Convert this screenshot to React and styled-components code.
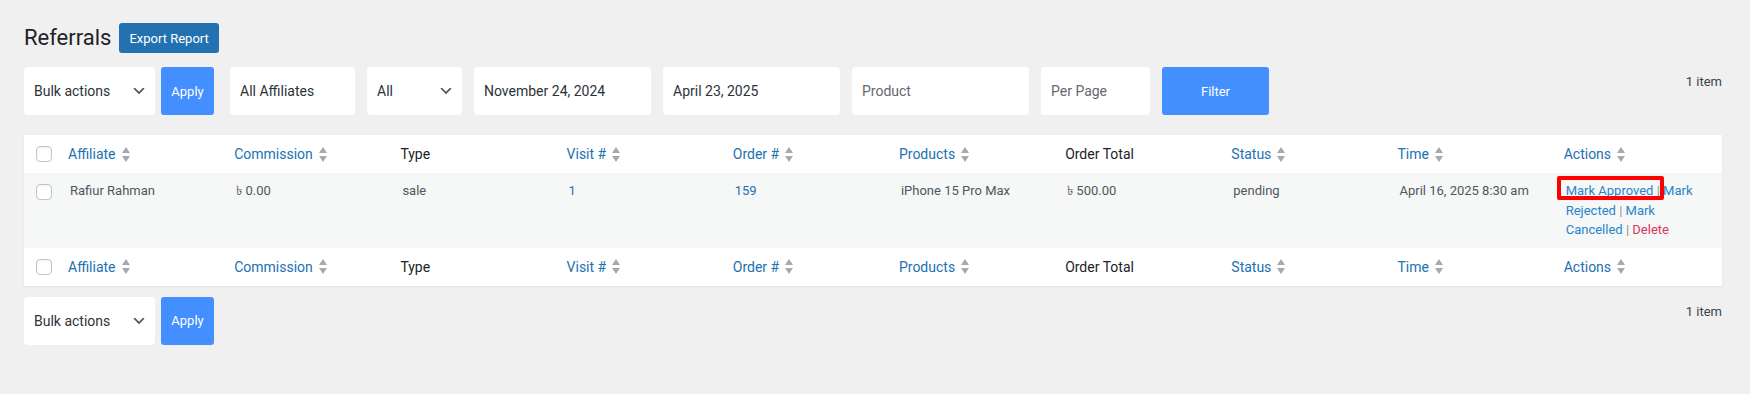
import React from "react";
import styled, { createGlobalStyle } from "styled-components";

const GlobalStyle = createGlobalStyle`
  body {
    margin: 0;
    background: #f0f0f1;
    font-family: "Segoe UI", Roboto, "Liberation Sans", sans-serif;
    color: #3c434a;
  }
`;

const Page = styled.div`
  padding: 23px 28px 40px 24px;
`;

const TitleRow = styled.div`
  display: flex;
  align-items: center;
  gap: 8px;
  height: 30px;
`;

const Title = styled.h1`
  margin: 0;
  font-size: 22px;
  font-weight: 400;
  line-height: 30px;
  color: #1d2327;
`;

const ExportButton = styled.button`
  height: 30px;
  padding: 0 10px;
  border: 0;
  border-radius: 3px;
  background: #2271b1;
  color: #fff;
  font-family: inherit;
  font-size: 13px;
`;

const Toolbar = styled.div`
  display: flex;
  align-items: flex-start;
  gap: 12px;
  margin-top: ${({ $top }) => $top}px;
`;

const BulkGroup = styled.div`
  display: flex;
  gap: 6px;
  margin-right: 4px;
`;

const SelectBox = styled.div`
  box-sizing: border-box;
  display: flex;
  align-items: center;
  justify-content: space-between;
  width: ${({ $w }) => $w}px;
  height: 48px;
  padding: 0 8px 0 10px;
  background: #fff;
  border-radius: 4px;
  font-size: 14px;
  color: #2c3338;
  svg {
    flex: none;
  }
`;

const TextInput = styled.input`
  box-sizing: border-box;
  width: ${({ $w }) => $w}px;
  height: 48px;
  padding: 0 10px;
  border: 0;
  border-radius: 4px;
  background: #fff;
  font-family: inherit;
  font-size: 14px;
  color: #2c3338;
  outline: none;
  &::placeholder {
    color: #646970;
  }
`;

const BlueButton = styled.button`
  width: ${({ $w }) => $w}px;
  height: 48px;
  border: 0;
  border-radius: 3px;
  background: #448fff;
  color: #fff;
  font-family: inherit;
  font-size: 13px;
`;

const ItemCount = styled.div`
  margin-left: auto;
  margin-top: 5px;
  font-size: 13px;
  line-height: 19.5px;
  color: #3c434a;
`;

const Table = styled.table`
  width: 100%;
  margin-top: 20px;
  border-collapse: collapse;
  table-layout: fixed;
  background: #fff;
  box-shadow: 0 1px 2px rgba(0, 0, 0, 0.06);
`;

const CheckCol = styled.col`
  width: 36px;
`;

const HeadRow = styled.tr`
  background: #fff;
`;

const BodyRow = styled.tr`
  background: #f6f7f7;
`;

const Th = styled.th`
  padding: 8px;
  height: 38px;
  box-sizing: border-box;
  text-align: left;
  font-weight: 400;
  font-size: 14px;
  line-height: 22px;
  vertical-align: middle;
  color: ${({ $sortable }) => ($sortable ? "#2271b1" : "#1d2327")};
  white-space: nowrap;
`;

const CheckCell = styled.td`
  padding: ${({ $body }) => ($body ? "11px 0 0 12px" : "0 0 0 12px")};
  vertical-align: ${({ $body }) => ($body ? "top" : "middle")};
`;

const Checkbox = styled.span`
  display: block;
  box-sizing: border-box;
  width: 16px;
  height: 16px;
  border: 1px solid #c3c4c7;
  border-radius: 4px;
  background: #fff;
  box-shadow: inset 0 1px 2px rgba(0, 0, 0, 0.06);
`;

const Td = styled.td`
  padding: 8px 10px;
  font-size: 13px;
  line-height: 19.5px;
  vertical-align: top;
  color: ${({ $link }) => ($link ? "#2271b1" : "#50575e")};
`;

const SortLabel = styled.span`
  display: inline-flex;
  align-items: center;
  gap: 6px;
`;

const ActionLink = styled.span`
  color: #2585cc;
`;

const Flagged = styled(ActionLink)`
  position: relative;
  &::after {
    content: "";
    position: absolute;
    top: -7px;
    left: -9px;
    right: -11px;
    bottom: -2px;
    border: 4px solid #ff0000;
    border-radius: 2px;
  }
`;

const DeleteLink = styled.span`
  color: #d63660;
`;

const Sep = styled.span`
  color: #8c8f94;
`;

const Chevron = () => (
  <svg width="16" height="16" viewBox="0 0 20 20">
    <path d="M5 6l5 5 5-5 2 1-7 7-7-7 2-1z" fill="#50575e" />
  </svg>
);

const SortIcon = () => (
  <svg width="8" height="15" viewBox="0 0 8 15">
    <path d="M0 6 L4 0 L8 6 Z" fill="#a7aaad" />
    <path d="M0 9 L8 9 L4 15 Z" fill="#a7aaad" />
  </svg>
);

const columns = [
  { label: "Affiliate", sortable: true },
  { label: "Commission", sortable: true },
  { label: "Type" },
  { label: "Visit #", sortable: true },
  { label: "Order #", sortable: true },
  { label: "Products", sortable: true },
  { label: "Order Total" },
  { label: "Status", sortable: true },
  { label: "Time", sortable: true },
  { label: "Actions", sortable: true },
];

const HeaderCells = () => (
  <HeadRow>
    <CheckCell>
      <Checkbox />
    </CheckCell>
    {columns.map((c) => (
      <Th key={c.label} $sortable={c.sortable}>
        {c.sortable ? (
          <SortLabel>
            {c.label}
            <SortIcon />
          </SortLabel>
        ) : (
          c.label
        )}
      </Th>
    ))}
  </HeadRow>
);

const BulkActions = () => (
  <BulkGroup>
    <SelectBox $w={131}>
      Bulk actions
      <Chevron />
    </SelectBox>
    <BlueButton $w={53}>Apply</BlueButton>
  </BulkGroup>
);

export default function App() {
  return (
    <Page>
      <GlobalStyle />
      <TitleRow>
        <Title>Referrals</Title>
        <ExportButton>Export Report</ExportButton>
      </TitleRow>

      <Toolbar $top={14}>
        <BulkActions />
        <TextInput $w={125} readOnly defaultValue="All Affiliates" />
        <SelectBox $w={95}>
          All
          <Chevron />
        </SelectBox>
        <TextInput $w={177} readOnly defaultValue="November 24, 2024" />
        <TextInput $w={177} readOnly defaultValue="April 23, 2025" />
        <TextInput $w={177} readOnly placeholder="Product" />
        <TextInput $w={109} readOnly placeholder="Per Page" />
        <BlueButton $w={107}>Filter</BlueButton>
        <ItemCount>1 item</ItemCount>
      </Toolbar>

      <Table>
        <colgroup>
          <CheckCol />
          {columns.map((c) => (
            <col key={c.label} />
          ))}
        </colgroup>
        <thead>
          <HeaderCells />
        </thead>
        <tbody>
          <BodyRow>
            <CheckCell $body>
              <Checkbox />
            </CheckCell>
            <Td>Rafiur Rahman</Td>
            <Td>৳ 0.00</Td>
            <Td>sale</Td>
            <Td $link>1</Td>
            <Td $link>159</Td>
            <Td>iPhone 15 Pro Max</Td>
            <Td>৳ 500.00</Td>
            <Td>pending</Td>
            <Td>April 16, 2025 8:30 am</Td>
            <Td>
              <Flagged>Mark Approved</Flagged> <Sep>|</Sep>{" "}
              <ActionLink>Mark Rejected</ActionLink> <Sep>|</Sep>{" "}
              <ActionLink>Mark Cancelled</ActionLink> <Sep>|</Sep>{" "}
              <DeleteLink>Delete</DeleteLink>
            </Td>
          </BodyRow>
        </tbody>
        <tfoot>
          <HeaderCells />
        </tfoot>
      </Table>

      <Toolbar $top={11}>
        <BulkActions />
        <ItemCount>1 item</ItemCount>
      </Toolbar>
    </Page>
  );
}
